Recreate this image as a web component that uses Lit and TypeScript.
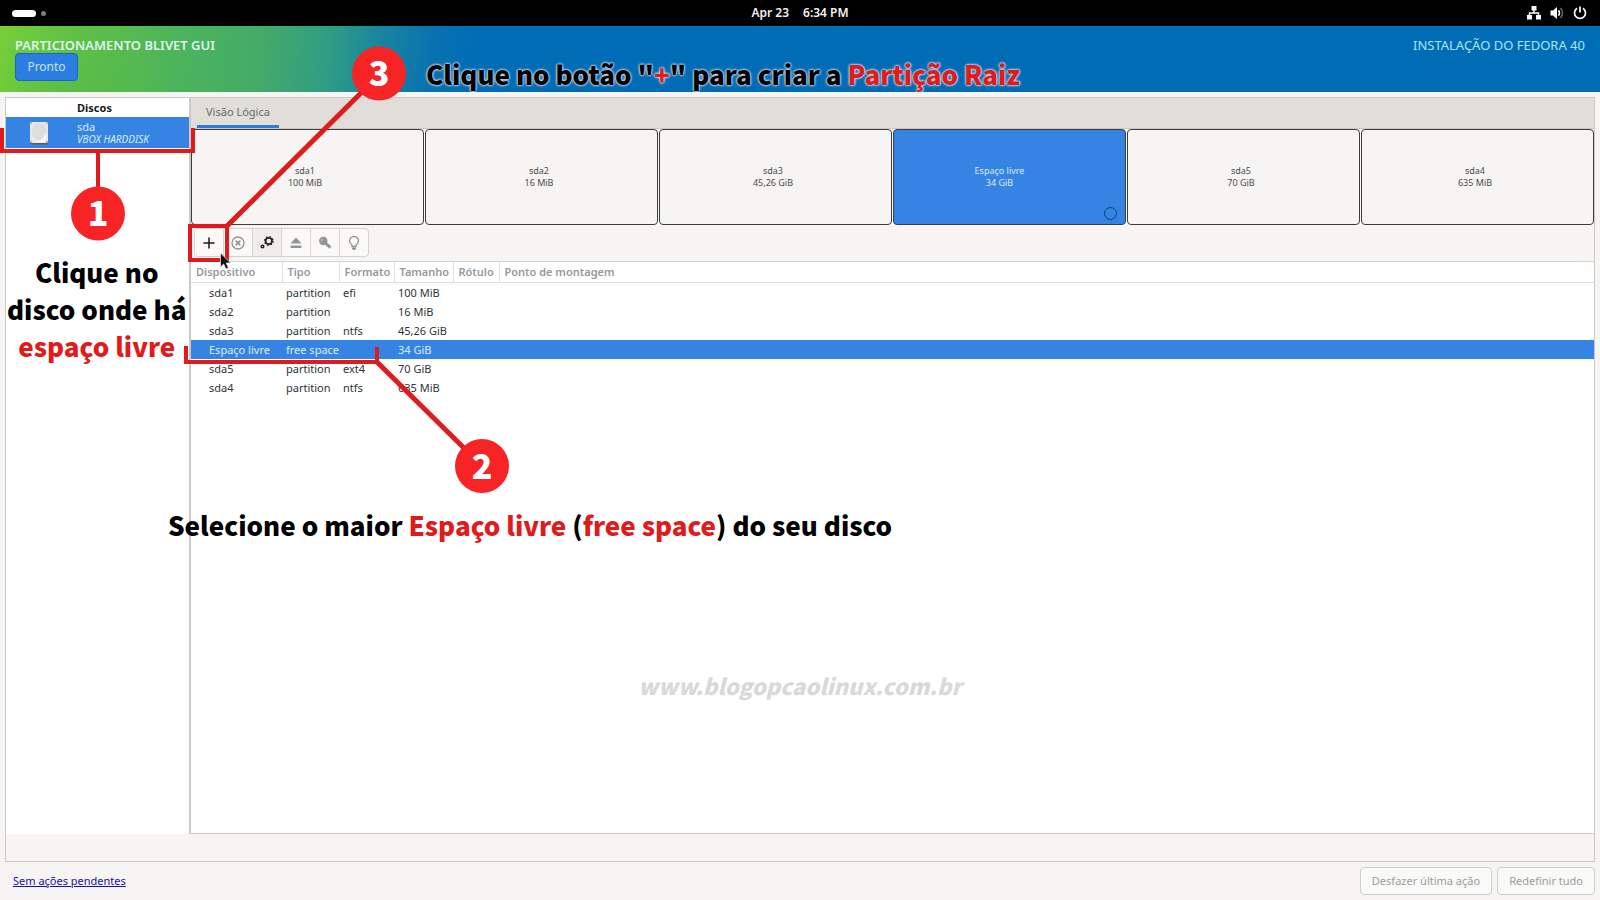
import { LitElement, html, css, svg } from "lit";
import { customElement, state } from "lit/decorators.js";
import { classMap } from "lit/directives/class-map.js";

interface Device {
  name: string;
  kind: string;
  format: string;
  size: string;
}

const DEVICES: Device[] = [
  { name: "sda1", kind: "partition", format: "efi", size: "100 MiB" },
  { name: "sda2", kind: "partition", format: "", size: "16 MiB" },
  { name: "sda3", kind: "partition", format: "ntfs", size: "45,26 GiB" },
  { name: "Espaço livre", kind: "free space", format: "", size: "34 GiB" },
  { name: "sda5", kind: "partition", format: "ext4", size: "70 GiB" },
  { name: "sda4", kind: "partition", format: "ntfs", size: "635 MiB" },
];

const COLUMNS = ["Dispositivo", "Tipo", "Formato", "Tamanho", "Rótulo", "Ponto de montagem"];

const icon = (body: unknown) => html`<svg width="16" height="16" viewBox="0 0 16 16" aria-hidden="true">${body}</svg>`;

const TOOLS = [
  { label: "Adicionar", cls: "ready", art: svg`<path d="M8 2.500v11M2.500 8h11" stroke="#1a1a1a" stroke-width="1.500" fill="none"/>` },
  { label: "Excluir", cls: "", art: svg`<circle cx="8" cy="8" r="6" fill="none" stroke="#929595" stroke-width="1.300"/><path d="M5.700 5.700l4.600 4.600M10.300 5.700l-4.600 4.600" stroke="#929595" stroke-width="1.700"/>` },
  { label: "Editar", cls: "active", art: svg`<circle cx="9.800" cy="6" r="3.200" fill="none" stroke="#222" stroke-width="1.700"/><circle cx="9.800" cy="6" r="4.400" fill="none" stroke="#222" stroke-width="1.200" stroke-dasharray="1.500 1.956"/><circle cx="3.500" cy="11.500" r="1.300" fill="none" stroke="#222" stroke-width="1.500"/>` },
  { label: "Desmontar", cls: "", art: svg`<path d="M8 2.500L13.500 8.500h-11zM2.500 10.500h11v2.500h-11z" fill="#929595"/>` },
  { label: "Desbloquear", cls: "", art: svg`<circle cx="6.300" cy="6" r="4.200" fill="#929595"/><path d="M8.500 8l5 4.600" stroke="#929595" stroke-width="2.800"/><circle cx="5" cy="5" r="1" fill="#c9c9c7"/><path d="M10 11.500l1.300-1" stroke="#929595" stroke-width="1.500"/>` },
  { label: "Informações", cls: "", art: svg`<path d="M6 11.500V10C4.500 9 3.500 7.700 3.500 6a4.500 4.500 0 0 1 9 0c0 1.700-1 3-2.500 4v1.500z" fill="none" stroke="#929595" stroke-width="1.300"/><path d="M6 12.500h4v1.200L9 15H7l-1-1.300z" fill="#929595"/>` },
];

@customElement("app-root")
export class AppRoot extends LitElement {
  @state() private selected = 3;

  static styles = css`
    :host {
      display: flex;
      flex-direction: column;
      position: relative;
      min-height: 100vh;
      overflow: hidden;
      background: #f6f5f4;
      color: #2e3436;
      font: 12px/16px "Noto Sans", "Open Sans", sans-serif;
    }
    * { box-sizing: border-box; }
    button { font: inherit; color: inherit; margin: 0; padding: 0; cursor: default; }
    .shell {
      display: grid;
      grid-template-columns: 1fr auto 1fr;
      align-items: center;
      height: 26px;
      padding: 0 12px;
      background: #000;
      color: #f2f2f2;
    }
    .spaces { display: flex; align-items: center; gap: 5px; }
    .space-on { width: 24px; height: 7px; border-radius: 4px; background: #fff; }
    .space { width: 5px; height: 5px; border-radius: 50%; background: #7d7d7d; }
    .clock { display: flex; gap: 14px; font-weight: 600; }
    .status { display: flex; justify-content: flex-end; gap: 7px; }
    .banner {
      display: flex;
      justify-content: space-between;
      align-items: flex-start;
      height: 66px;
      padding: 11px 15px 0;
      background:
        radial-gradient(circle at 80px 80px, #4db84a88 0, #4db84a00 100px),
        linear-gradient(95deg, #76cf38 0, #62c145 80px, #4bb45c 180px, #44ab68 260px, #2f9d84 330px, #1783a2 385px, #0670b2 440px, #006cb5 480px);
      color: #dff6ee;
    }
    .task { display: flex; flex-direction: column; align-items: flex-start; }
    .title { margin: 0; font-size: 13px; line-height: 16px; font-weight: 600; }
    .distro { font-size: 13px; line-height: 16px; color: #a5e8f5; }
    .done {
      width: 63px;
      height: 28px;
      border: 1px solid #1b65c4;
      border-radius: 4px;
      background: #2b7de2;
      color: #c5e3fa;
    }
    .frame {
      flex: 1;
      display: flex;
      flex-direction: column;
      margin: 5px 5px 0;
      border: 1px solid #cdc9c5;
      padding-bottom: 27px;
    }
    .split { flex: 1; display: flex; }
    .disks { width: 185px; background: #fff; border-right: 2px solid #cbc9c7; }
    .disks-head {
      padding: 2px 0 1px 71px;
      margin: 0;
      font-size: 11px;
      font-weight: 700;
      line-height: 16px;
      color: #1a1a1a;
    }
    .disk {
      display: flex;
      align-items: center;
      gap: 28px;
      width: 100%;
      height: 31px;
      padding-left: 23px;
      border: 0;
      background: #3584e4;
      color: #d8ecff;
      text-align: left;
    }
    .disk-name { display: block; font-size: 11px; line-height: 12px; }
    .disk-model { display: block; font-size: 10px; line-height: 12px; font-style: italic; }
    .main { flex: 1; display: flex; flex-direction: column; min-width: 0; border-bottom: 1px solid #cdc9c5; }
    .tabs { height: 31px; padding-left: 6px; background: #e1deda; border-bottom: 1px solid #cdc9c5; }
    .tab {
      height: 30px;
      padding: 0 9px;
      border: 0;
      border-bottom: 3px solid #2d7bd4;
      background: none;
      color: #68696a;
      font-size: 11px;
    }
    .map { display: flex; gap: 1px; height: 96px; background: #fbfbfa; }
    .part {
      flex: 1 1 100px;
      display: flex;
      flex-direction: column;
      justify-content: center;
      position: relative;
      padding-right: 5px;
      border: 1px solid #3c3c3c;
      border-radius: 4px;
      background: #f6f5f3;
      color: #4a4c4d;
      font-size: 9px;
      line-height: 12px;
      text-align: center;
    }
    .part.chosen { padding-right: 20px; background: #3584e4; color: #dcecfb; }
    .ring { position: absolute; right: 8px; bottom: 4px; width: 13px; height: 13px; border: 1px solid #143f66; border-radius: 50%; }
    .tools { display: flex; padding: 3px; height: 36px; }
    .tool {
      display: flex;
      align-items: center;
      justify-content: center;
      width: 30px;
      height: 29px;
      margin-right: -1px;
      border: 1px solid #d6d3d0;
      background: #faf9f8;
    }
    .tool:first-child { border-radius: 4px 0 0 4px; }
    .tool:last-child { border-radius: 0 4px 4px 0; }
    .tool.active { background: #efeeec; }
    .list { flex: 1; background: #fff; border-top: 1px solid #d5d2cf; }
    table { width: 100%; table-layout: fixed; border-collapse: collapse; font-size: 11px; }
    .c0 { width: 91px; }
    .c1 { width: 57px; }
    .c2 { width: 55px; }
    .c3 { width: 59px; }
    .c4 { width: 46px; }
    th {
      height: 20px;
      padding: 0 0 0 5px;
      border-bottom: 1px solid #e3e1df;
      border-right: 1px solid #e3e1df;
      color: #96989a;
      font-weight: 600;
      text-align: left;
      line-height: 18px;
      white-space: nowrap;
    }
    th:last-child { border-right: 0; }
    td { height: 19px; padding: 0 0 0 4px; line-height: 19px; white-space: nowrap; }
    td:first-child { padding-left: 18px; }
    .chosen td { background: #3584e4; color: #dcecfb; }
    .footer { display: flex; align-items: center; gap: 5px; height: 38px; padding: 0 5px 0 13px; }
    .pending { margin-right: auto; color: #1d0fa8; font-size: 11px; text-decoration: underline; }
    .act {
      height: 28px;
      padding: 0 11px;
      border: 1px solid #d0cdca;
      border-radius: 4px;
      background: #fafaf8;
      color: #9b9d9e;
      font-size: 11px;
    }
    .notes { position: absolute; left: 0; top: 0; pointer-events: none; }
    .note {
      position: absolute;
      margin: 0;
      font: 900 26px/37px "Noto Sans CJK SC", "Noto Sans", sans-serif;
      color: #000;
      white-space: nowrap;
      text-align: center;
      pointer-events: none;
    }
    .note em { font-style: normal; color: #e01b1b; }
    .note-disk { left: 7px; top: 253px; }
    .note-space { left: 168px; top: 506px; }
    .note-add { left: 426px; top: 55px; text-shadow: 0 0 2px #dbe3f0, 0 0 2px #dbe3f0, 0 0 3px #dbe3f0; }
    .num { font: 900 34px "Noto Sans CJK SC", "Noto Sans", sans-serif; fill: #fff; text-anchor: middle; }
    .site {
      position: absolute;
      left: 0;
      right: 0;
      top: 669px;
      margin: 0;
      text-align: center;
      font: italic 900 22px/32px "Noto Sans CJK SC", "Noto Sans", sans-serif;
      color: #d9d9d9;
      pointer-events: none;
    }
  `;

  private renderShell() {
    return html`
      <header class="shell">
        <div class="spaces"><span class="space-on"></span><span class="space"></span></div>
        <div class="clock"><span>Apr 23</span><span>6:34 PM</span></div>
        <div class="status">
          ${icon(svg`<path d="M5.500 1h5v4.500h-5zM1 10h5v4.500H1zM10 10h5v4.500h-5z" fill="#fff"/><path d="M8 5v3M3.500 10.500V8h9v2.500" fill="none" stroke="#fff" stroke-width="1.500"/>`)}
          ${icon(svg`<path d="M1.500 5.500H4L8 2v12L4 10.500H1.500z" fill="#fff"/><path d="M9.500 5.300q2 2.700 0 5.400" fill="none" stroke="#fff" stroke-width="1.500"/><path d="M11.500 3q4 5 0 10" fill="none" stroke="#666" stroke-width="1.500"/>`)}
          ${icon(svg`<path d="M5 3.300a5.500 5.500 0 1 0 6 0M8 1.500v6" fill="none" stroke="#fff" stroke-width="1.700"/>`)}
        </div>
      </header>`;
  }

  private renderTable() {
    return html`
      <table>
        <thead><tr>${COLUMNS.map((c, i) => html`<th class="c${i}" scope="col">${c}</th>`)}</tr></thead>
        <tbody>
          ${DEVICES.map((d, i) => html`
            <tr class=${classMap({ chosen: i === this.selected })} @click=${() => (this.selected = i)}>
              <td>${d.name}</td><td>${d.kind}</td><td>${d.format}</td><td>${d.size}</td><td></td><td></td>
            </tr>`)}
        </tbody>
      </table>`;
  }

  private renderNotes() {
    return html`
      <svg class="notes" width="620" height="500" viewBox="0 0 620 500" aria-hidden="true">
        <g fill="none" stroke="#df1b1d" stroke-width="4">
          <path d="M2 128V151H193V128M98 151V190"/>
          <path d="M190 226H227V260H190z"/>
          <path d="M227 226L372 82" stroke-width="5"/>
          <path d="M186 346V362H377V347"/>
          <path d="M377 362L468 452" stroke-width="5"/>
        </g>
        <g fill="#f62424">
          <circle cx="98" cy="213.500" r="27"/><circle cx="379" cy="73.500" r="27"/><circle cx="482" cy="466" r="27"/>
        </g>
        <text class="num" x="98" y="226">1</text>
        <text class="num" x="379" y="86">3</text>
        <text class="num" x="482" y="479">2</text>
        <path d="M220.500 253v14l3.200-3 2.200 5 2.500-1.100-2.200-4.900h4.300z" fill="#111" stroke="#ddd" stroke-width=".8"/>
      </svg>
      <p class="note note-disk">Clique no<br />disco onde há<br /><em>espaço livre</em></p>
      <p class="note note-space">Selecione o maior <em>Espaço livre</em> (<em>free space</em>) do seu disco</p>
      <p class="note note-add">Clique no botão "<em>+</em>" para criar a <em>Partição Raiz</em></p>
      <p class="site">www.blogopcaolinux.com.br</p>`;
  }

  render() {
    return html`
      ${this.renderShell()}
      <section class="banner">
        <div class="task">
          <h1 class="title">PARTICIONAMENTO BLIVET GUI</h1>
          <button class="done">Pronto</button>
        </div>
        <span class="distro">INSTALAÇÃO DO FEDORA 40</span>
      </section>
      <main class="frame">
        <div class="split">
          <aside class="disks">
            <h2 class="disks-head">Discos</h2>
            <button class="disk">
              <svg width="20" height="24" viewBox="0 0 20 24" aria-hidden="true">
                <rect x="1" y="1.500" width="18" height="22" rx="2" fill="#555f6b"/>
                <rect x="1" y="1" width="18" height="21" rx="2" fill="#e9e9e7"/>
                <ellipse cx="10" cy="10.500" rx="7.500" ry="8.500" fill="#dededc"/>
                <path d="M5 21q10-1 12-10v10z" fill="#f7f7f6"/>
                <g fill="#999"><circle cx="2.500" cy="2.500" r=".7"/><circle cx="17.500" cy="2.500" r=".7"/><circle cx="2.500" cy="20.500" r=".7"/><circle cx="17.500" cy="20.500" r=".7"/></g>
              </svg>
              <span><span class="disk-name">sda</span><span class="disk-model">VBOX HARDDISK</span></span>
            </button>
          </aside>
          <section class="main">
            <div class="tabs" role="tablist"><button class="tab" role="tab" aria-selected="true">Visão Lógica</button></div>
            <div class="map">
              ${DEVICES.map((d, i) => html`
                <button class=${classMap({ part: true, chosen: i === this.selected })} @click=${() => (this.selected = i)}>
                  <span>${d.name}</span><span>${d.size}</span>
                  ${i === this.selected ? html`<span class="ring"></span>` : ""}
                </button>`)}
            </div>
            <div class="tools" role="toolbar">
              ${TOOLS.map((t) => html`<button class="tool ${t.cls}" aria-label=${t.label}>${icon(t.art)}</button>`)}
            </div>
            <div class="list">${this.renderTable()}</div>
          </section>
        </div>
      </main>
      <footer class="footer">
        <a class="pending" href="#">Sem ações pendentes</a>
        <button class="act">Desfazer última ação</button>
        <button class="act">Redefinir tudo</button>
      </footer>
      ${this.renderNotes()}`;
  }
}
